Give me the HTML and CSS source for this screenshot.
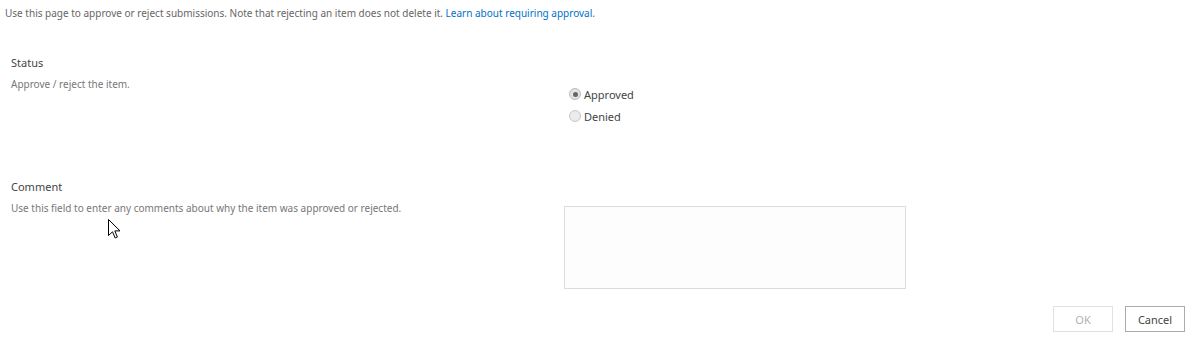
FILE: index.html
```html
<!DOCTYPE html>
<html>
<head>
<meta charset="utf-8">
<link rel="stylesheet" href="styles.css">
</head>
<body>
<div class="page">
  <p class="intro">Use this page to approve or reject submissions. Note that rejecting an item does not delete it. <a href="#" class="link">Learn about requiring approval.</a></p>
  <div class="section status">
    <div class="label-col">
      <h3 class="title">Status</h3>
      <div class="desc">Approve / reject the item.</div>
    </div>
    <div class="field-col radios">
      <label class="radio"><span class="dot checked"></span>Approved</label>
      <label class="radio"><span class="dot"></span>Denied</label>
    </div>
  </div>
  <div class="section comment">
    <div class="label-col">
      <h3 class="title">Comment</h3>
      <div class="desc">Use this field to enter any comments about why the item was approved or rejected.</div>
    </div>
    <div class="field-col">
      <div class="textarea"></div>
    </div>
  </div>
  <div class="buttons">
    <button class="btn disabled">OK</button>
    <button class="btn">Cancel</button>
  </div>
  <svg class="cursor" width="13" height="20" viewBox="0 0 13 20"><path d="M0.5 0.5 L0.5 16.5 L4.5 12.8 L7.2 19 L9.4 18 L6.8 11.9 L12 11.9 Z" fill="#fff" stroke="#000" stroke-width="1"/></svg>
</div>
</body>
</html>
```
FILE: styles.css
```css
html, body { margin: 0; padding: 0; background: #fff; }
body { font-family: "Segoe UI", "Noto Sans", "Open Sans", sans-serif; font-size: 11px; color: #444; }
.page { position: relative; width: 1194px; height: 343px; overflow: hidden; }
.intro { margin: 0; padding: 5px 0 0 5px; line-height: 16px; font-size: 10px; color: #666; }
.link { color: #0072c6; text-decoration: none; }
.section { display: flex; padding-left: 11px; }
.status { margin-top: 34px; height: 124px; }
.label-col { width: 553px; }
.title { margin: 0; font-weight: normal; font-size: 11px; color: #444; line-height: 16px; }
.desc { margin-top: 5px; color: #777; font-size: 10px; line-height: 16px; }
.radios { display: flex; flex-direction: column; gap: 6px; padding-top: 31px; padding-left: 5px; }
.radio { display: flex; align-items: center; height: 16px; font-size: 11px; color: #444; }
.dot { width: 12px; height: 12px; border-radius: 50%; border: 1px solid #c6c6c6; background: #ececec; margin-right: 3px; box-sizing: border-box; position: relative; }
.dot.checked { border-color: #bbb; background: #e4e4e4; }
.dot.checked::after { content: ""; position: absolute; left: 2.5px; top: 2.5px; width: 5px; height: 5px; border-radius: 50%; background: #666; }
.comment { height: 120px; }
.textarea { margin-top: 27px; width: 342px; height: 83px; border: 1px solid #dcdcdc; background: #fdfdfd; box-sizing: border-box; }
.buttons { display: flex; justify-content: flex-end; gap: 12px; padding-right: 9px; margin-top: 7px; }
.btn { width: 60px; height: 26px; border: 1px solid #ababab; background: #fff; color: #444; font-family: inherit; font-size: 11px; padding: 0; }
.btn.disabled { border-color: #e1e1e1; color: #b1b1b1; }
.cursor { position: absolute; left: 108px; top: 219px; }
```
